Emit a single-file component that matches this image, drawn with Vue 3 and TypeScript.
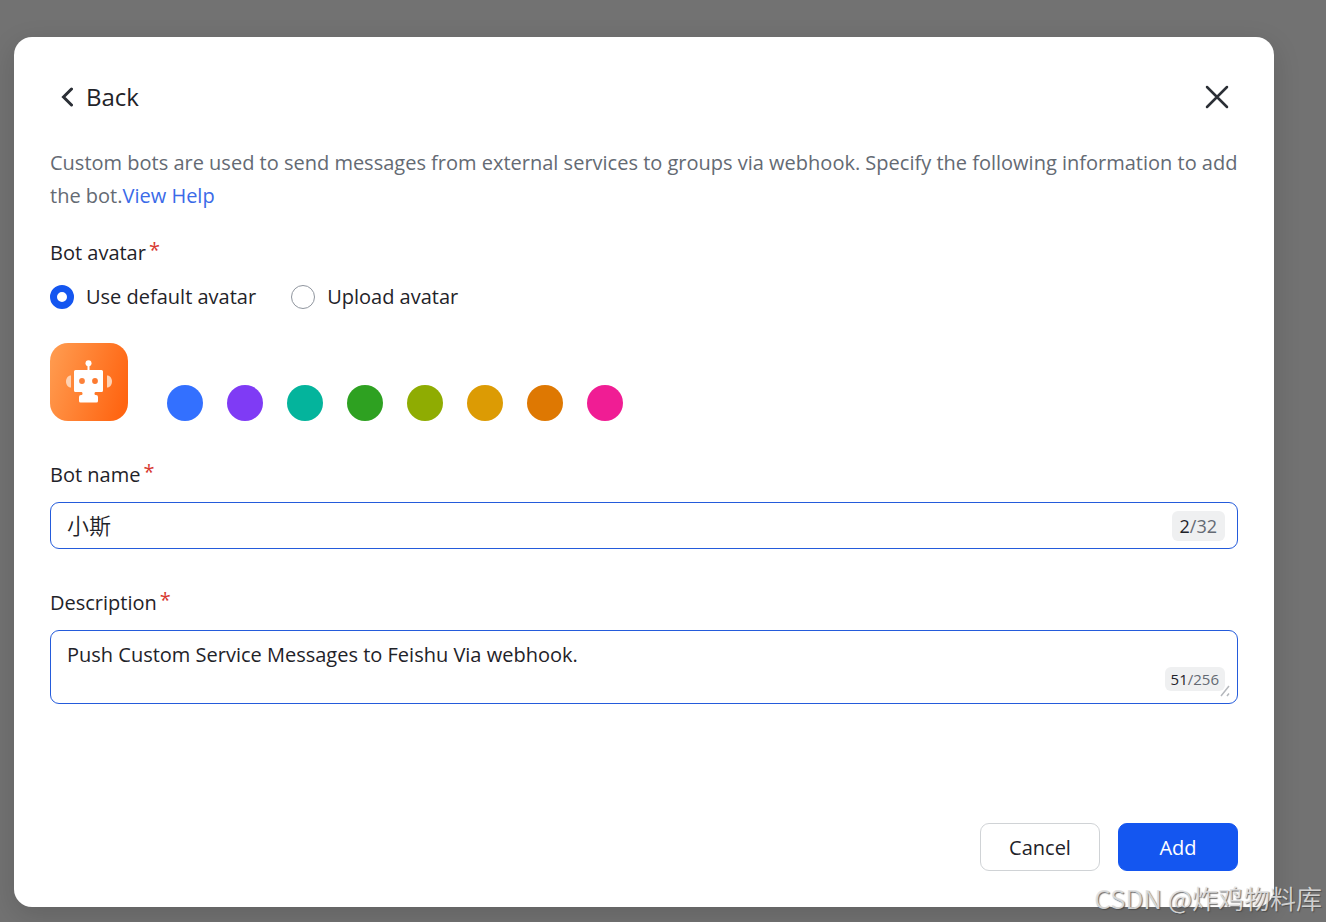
<script setup lang="ts">
import { computed, ref } from 'vue'

const avatarMode = ref<'default' | 'upload'>('default')
const botName = ref('小斯')
const description = ref('Push Custom Service Messages to Feishu Via webhook.')
const nameLength = computed(() => botName.value.length)
const descriptionLength = computed(() => description.value.length)

const colors = [
  { name: 'Blue', value: '#3370ff' },
  { name: 'Purple', value: '#7f3bf5' },
  { name: 'Teal', value: '#04b49c' },
  { name: 'Green', value: '#2ea121' },
  { name: 'Lime', value: '#8fac02' },
  { name: 'Yellow', value: '#dc9b04' },
  { name: 'Orange', value: '#de7802' },
  { name: 'Pink', value: '#f01d94' },
]
</script>

<template>
  <div class="backdrop">
    <main class="dialog">
      <header class="header">
        <button type="button" class="back">
          <svg width="14" height="20" viewBox="0 0 14 20" aria-hidden="true">
            <path d="M12.500 2 4.500 10l8 8" />
          </svg>
          <span>Back</span>
        </button>
        <button type="button" class="close" aria-label="Close">
          <svg width="24" height="24" viewBox="0 0 24 24" aria-hidden="true">
            <path d="M2 2 22 22M22 2 2 22" />
          </svg>
        </button>
      </header>

      <p class="intro">
        Custom bots are used to send messages from external services to groups via webhook. Specify the following information to add the bot.<a href="#">View Help</a>
      </p>

      <form class="form" @submit.prevent>
        <fieldset class="avatar">
          <legend class="label">Bot avatar<span class="required">*</span></legend>
          <div class="radios">
            <label class="radio">
              <input v-model="avatarMode" type="radio" name="avatar" value="default" />
              Use default avatar
            </label>
            <label class="radio">
              <input v-model="avatarMode" type="radio" name="avatar" value="upload" />
              Upload avatar
            </label>
          </div>
          <div class="palette">
            <svg class="robot" width="78" height="78" viewBox="0 0 78 78" aria-hidden="true">
              <defs>
                <linearGradient id="robot-fill" x1="0" y1="0.3" x2="1" y2="0.6">
                  <stop offset="0" stop-color="#ff994d" />
                  <stop offset="1" stop-color="#ff6512" />
                </linearGradient>
              </defs>
              <rect width="78" height="78" rx="18" fill="url(#robot-fill)" />
              <g fill="#ffd2b3">
                <path d="M21 32.500v12c-3 0-5-2.700-5-6s2-6 5-6Z" />
                <path d="M57 32.500v12c3 0 5-2.700 5-6s-2-6-5-6Z" />
              </g>
              <g fill="#fff">
                <circle cx="38.500" cy="20.200" r="3" />
                <rect x="37.500" y="21" width="2" height="8" />
                <path d="M25.500 27h26a1.500 1.500 0 0 1 1.500 1.500v19a1.500 1.500 0 0 1-1.500 1.500H46c-1 0-1.500.5-1.500 1.500s.5 1.500 1.500 1.500a2 2 0 0 1 2 2v4a1.500 1.500 0 0 1-1.500 1.500h-16A1.500 1.500 0 0 1 29 58v-4a2 2 0 0 1 2-2c1 0 1.500-.5 1.500-1.500S32 49 31 49h-5.500a1.500 1.500 0 0 1-1.500-1.500v-19a1.500 1.500 0 0 1 1.500-1.500Z" />
              </g>
              <circle cx="32" cy="38" r="2.900" fill="#fc813a" />
              <circle cx="45" cy="38" r="2.900" fill="#fc7a30" />
            </svg>
            <button
              v-for="color in colors"
              :key="color.name"
              type="button"
              class="swatch"
              :aria-label="color.name"
              :style="{ background: color.value }"
            ></button>
          </div>
        </fieldset>

        <div class="field">
          <label class="label" for="bot-name">Bot name<span class="required">*</span></label>
          <div class="box">
            <input id="bot-name" v-model="botName" class="control name" type="text" maxlength="32" />
            <span class="count"><b>{{ nameLength }}</b>/32</span>
          </div>
        </div>

        <div class="field">
          <label class="label" for="bot-description">Description<span class="required">*</span></label>
          <div class="box">
            <textarea id="bot-description" v-model="description" class="control area" maxlength="256"></textarea>
            <span class="count small"><b>{{ descriptionLength }}</b>/256</span>
            <svg class="grip" width="10" height="12" viewBox="0 0 10 12" aria-hidden="true">
              <path d="M1 11 9 1M7 11l2-2.500" />
            </svg>
          </div>
        </div>

        <footer class="actions">
          <button type="button" class="action">Cancel</button>
          <button type="submit" class="action primary">Add</button>
        </footer>
      </form>
    </main>
    <div class="watermark">CSDN @炸鸡物料库</div>
  </div>
</template>

<style>
body {
  margin: 0;
}
</style>

<style scoped>
.backdrop {
  position: relative;
  box-sizing: border-box;
  display: flex;
  min-height: 100vh;
  padding: 37px 52px 15px 14px;
  overflow: hidden;
  background: #727272;
  color: #1f2329;
  font-family: "Open Sans", "Noto Sans CJK SC", sans-serif;
  font-size: 20px;
  line-height: 33px;
}

.dialog {
  box-sizing: border-box;
  display: flex;
  flex: 1;
  flex-direction: column;
  min-width: 0;
  padding: 36px;
  border-radius: 18px;
  background: #fff;
  box-shadow: 0 8px 28px rgba(0, 0, 0, 0.14);
}

button,
input,
textarea {
  color: inherit;
  font: inherit;
}

button {
  cursor: pointer;
}

.header {
  display: flex;
  align-items: center;
  justify-content: space-between;
  height: 48px;
  padding: 0 9px;
}

.back,
.close {
  display: flex;
  align-items: center;
  padding: 0;
  border: 0;
  background: none;
}

.back {
  gap: 13px;
  font-size: 24px;
  line-height: 32px;
}

.back svg,
.close svg {
  fill: none;
  stroke: #2b2f36;
  stroke-linecap: round;
  stroke-width: 2.5;
}

.back svg {
  stroke-width: 3;
}

.intro {
  margin: 25px 0 0;
  color: #646a73;
}

.intro a {
  color: #3a6ae8;
  text-decoration: none;
}

.form {
  display: flex;
  flex: 1;
  flex-direction: column;
}

.avatar {
  min-width: 0;
  margin: 24px 0 0;
  padding: 0;
  border: 0;
}

.label {
  display: flex;
  padding: 0;
}

.required {
  margin-left: 3px;
  color: #d83931;
  line-height: 27px;
}

.radios {
  display: flex;
  gap: 35px;
  margin-top: 11px;
}

.radio {
  display: flex;
  align-items: center;
  gap: 12px;
}

.radio input {
  box-sizing: border-box;
  width: 24px;
  height: 24px;
  margin: 0;
  border: 1px solid #8f959e;
  border-radius: 50%;
  appearance: none;
  background: #fff;
}

.radio input:checked {
  border: 7px solid #1456f0;
}

.palette {
  display: flex;
  align-items: flex-end;
  gap: 24px;
  margin-top: 30px;
}

.robot {
  display: block;
  margin-right: 15px;
}

.swatch {
  width: 36px;
  height: 36px;
  padding: 0;
  border: 0;
  border-radius: 50%;
}

.field {
  margin-top: 37px;
}

.box {
  position: relative;
  margin-top: 11px;
}

.control {
  box-sizing: border-box;
  display: block;
  width: 100%;
  height: 47px;
  padding: 7px 84px 5px 16px;
  border: 1px solid #245bdb;
  border-radius: 9px;
  outline: 0;
  background: #fff;
}

.name {
  padding-top: 4px;
  padding-bottom: 8px;
  font-size: 22px;
  font-weight: 350;
}

.area {
  height: 74px;
  resize: none;
}

.count {
  position: absolute;
  right: 13px;
  bottom: 8px;
  padding: 0 8px;
  border-radius: 6px;
  background: #eff0f1;
  color: #646a73;
  font-size: 18px;
  line-height: 30px;
}

.count b {
  color: #1f2329;
  font-weight: 400;
}

.small {
  bottom: 13px;
  padding: 0 6px;
  font-size: 15px;
  line-height: 24px;
}

.grip {
  position: absolute;
  right: 8px;
  bottom: 7px;
  fill: none;
  stroke: #b5b8bd;
  stroke-width: 1.5;
}

.actions {
  display: flex;
  justify-content: flex-end;
  gap: 18px;
  margin-top: auto;
  padding-top: 36px;
}

.action {
  width: 120px;
  height: 48px;
  padding: 0;
  border: 1px solid #d0d3d6;
  border-radius: 9px;
  background: #fff;
}

.primary {
  border-color: #1456f0;
  background: #1456f0;
  color: #fff;
}

.watermark {
  position: absolute;
  right: 4px;
  bottom: 6px;
  color: rgba(225, 225, 225, 0.9);
  font-family: "Noto Sans CJK SC", sans-serif;
  font-size: 26px;
  font-weight: 350;
  line-height: 36px;
  text-shadow: 1px 1px 1px rgba(70, 70, 70, 0.8);
  white-space: nowrap;
}
</style>
